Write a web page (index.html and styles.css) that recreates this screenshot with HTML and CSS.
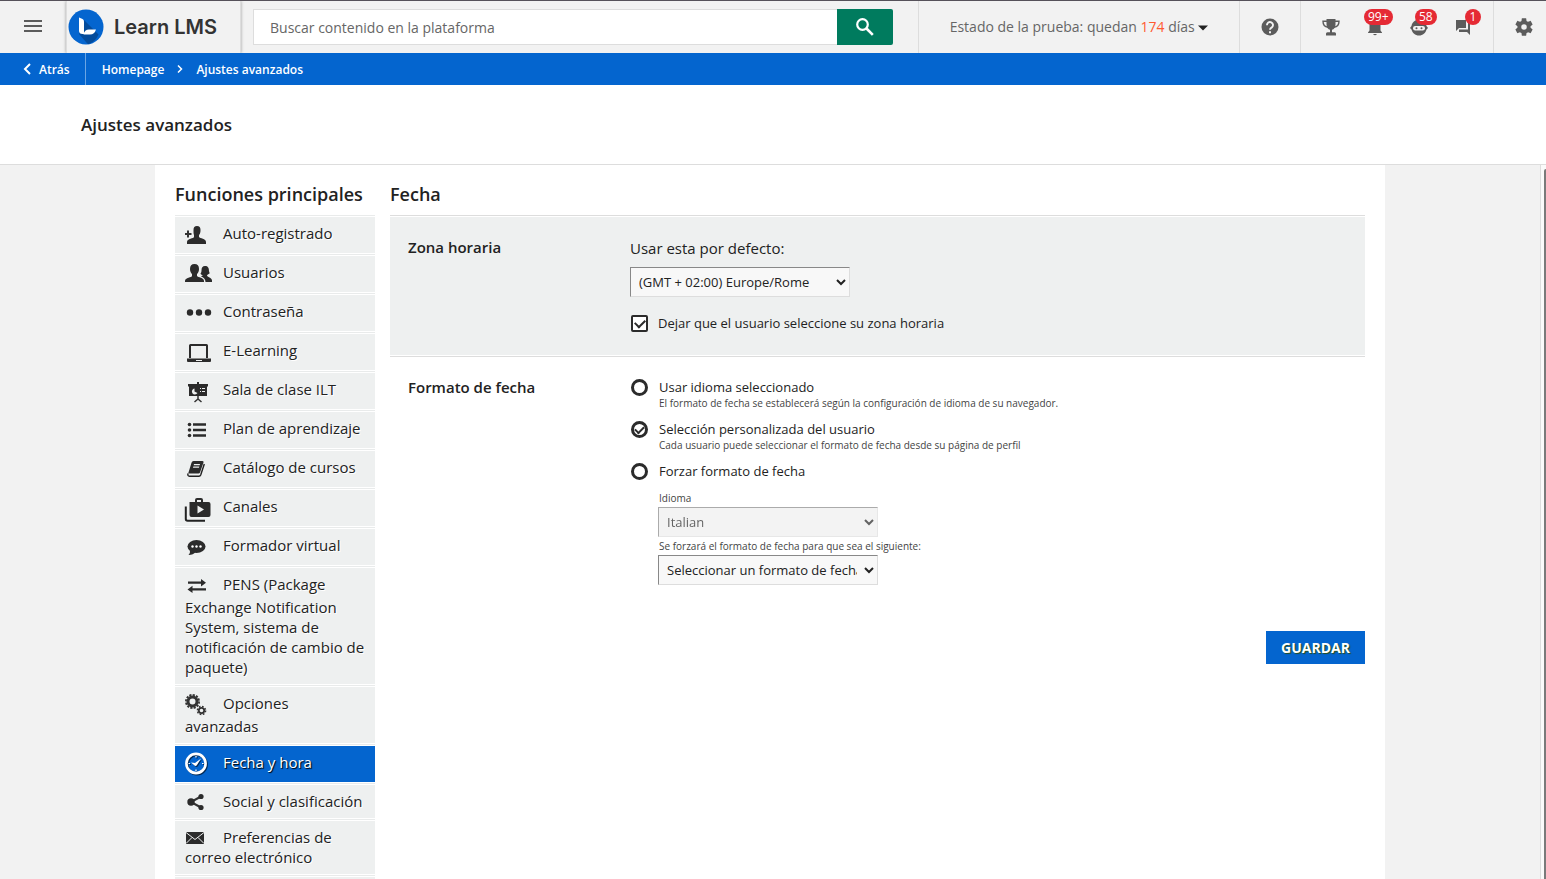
FILE: index.html
```html
<!DOCTYPE html>
<html lang="es">
<head>
    <meta charset="UTF-8">
    <meta name="viewport" content="width=device-width, initial-scale=1.0">
    <title>Ajustes avanzados</title>
    <link rel="stylesheet" href="styles.css">
</head>
<body>

<header class="topbar">
    <button class="menu-button" aria-label="Menú">
        <svg width="18" height="12" viewBox="0 0 18 12"><path d="M0 1h18M0 6h18M0 11h18" stroke="#5c5c5c" stroke-width="2"/></svg>
    </button>
    <a href="#" class="logo">
        <svg width="36" height="36" viewBox="0 0 36 36">
            <circle cx="18" cy="18" r="17.5" fill="#0465cf"/>
            <path d="M16 11l14.500 14.500A17.500 17.500 0 0 1 20 35.300L11 25z" fill="#034b9b"/>
            <path d="M11 8.500l3.500 1.500q1.500.8 1.500 2.500v12.500h-1.500Q11 25 11 21.500z" fill="#fff"/>
            <path d="M15.500 25.500q1-5 5.500-5h7q-1.500 5-6 5z" fill="#fff"/>
        </svg>
        <span>Learn LMS</span>
    </a>
    <form class="search">
        <input type="text" aria-label="Buscar" placeholder="Buscar contenido en la plataforma">
        <button type="button" aria-label="Buscar">
            <svg width="18" height="18" viewBox="0 0 18 18" fill="none" stroke="#fff"><circle cx="6.500" cy="6.500" r="5.300" stroke-width="2.200"/><path d="M10.500 10.500l6.300 6.300" stroke-width="2.600"/></svg>
        </button>
    </form>
    <button class="trial">Estado de la prueba: quedan <span class="days">174</span> días
        <svg width="10" height="6" viewBox="0 0 10 6"><path d="M0 .5h10L5 5.500z" fill="#222"/></svg>
    </button>
    <div class="tools help">
        <button aria-label="Ayuda">
            <svg width="18" height="18" viewBox="0 0 18 18"><circle cx="9" cy="9" r="8.500" fill="#5c5c5c"/><path d="M6 7.200a3 3 0 1 1 4.800 2.200Q9 10.500 9 11.800" fill="none" stroke="#f2f2f2" stroke-width="1.900"/><path d="M8 13.200h2v2H8z" fill="#f2f2f2"/></svg>
        </button>
    </div>
    <div class="tools alerts">
        <button aria-label="Logros">
            <svg width="18" height="17" viewBox="0 0 18 17" fill="#5c5c5c"><path d="M4.500 0h9v5.500c0 3-1.500 4.800-3.500 5.300v2.400h2.500c1 0 1.500.8 1.500 1.800v1.500H4V15c0-1 .5-1.800 1.500-1.800H8v-2.400C6 10.300 4.500 8.500 4.500 5.500z"/><path d="M5 2.300H1q0 5.500 5 6M13 2.300h4q0 5.500-5 6" fill="none" stroke="#5c5c5c" stroke-width="1.400"/></svg>
        </button>
        <button aria-label="Notificaciones">
            <svg width="18" height="18" viewBox="0 0 18 18" fill="#5c5c5c"><path d="M9 0c4 0 5.500 3 5.500 6v6.500l1.500 2V15H2v-.5l1.500-2V6C3.500 3 5 0 9 0zM7 16h4q-2 2.500-4 0z"/></svg>
            <span class="badge">99+</span>
        </button>
        <button aria-label="Asistente">
            <svg width="18" height="18" viewBox="0 0 18 18"><path d="M9 1.500c4 0 7 3 7.500 6.500L18 10l-1.500 1.500C15.500 15 13 17.500 9 17.500S2.500 15 1.500 11.500L0 10l1.500-2C2 4.500 5 1.500 9 1.500z" fill="#5c5c5c"/><rect x="3" y="8" width="12" height="4.500" rx="2.200" fill="#f2f2f2"/><circle cx="6.500" cy="10.200" r="1" fill="#5c5c5c"/><circle cx="11.500" cy="10.200" r="1" fill="#5c5c5c"/></svg>
            <span class="badge">58</span>
        </button>
        <button aria-label="Mensajes">
            <svg width="18" height="18" viewBox="0 0 18 18" fill="#5c5c5c"><path d="M2 2h10v8H5l-3 3zM14 5h2v12l-3-3H5v-2.500h9z"/></svg>
            <span class="badge">1</span>
        </button>
    </div>
    <div class="tools settings">
        <button aria-label="Configuración">
            <svg width="22" height="22" viewBox="0 0 24 24" fill="#5c5c5c"><path d="M19.140 12.940c.04-.3.060-.61.060-.94s-.02-.64-.07-.94l2.030-1.580c.18-.14.230-.41.120-.61l-1.920-3.320c-.12-.22-.37-.29-.59-.22l-2.390.96c-.5-.38-1.030-.7-1.620-.94L14.400 2.810c-.04-.24-.24-.41-.48-.41h-3.840c-.24 0-.43.170-.47.410L9.250 5.350c-.59.240-1.130.570-1.620.940L5.240 5.330c-.22-.08-.47 0-.59.220L2.740 8.870c-.12.210-.08.470.120.610l2.030 1.580c-.05.300-.09.630-.09.940s.02.640.070.940l-2.030 1.580c-.18.140-.23.410-.12.610l1.920 3.320c.12.220.370.290.590.220l2.390-.96c.5.380 1.030.7 1.620.940l.36 2.540c.05.240.240.410.480.410h3.840c.24 0 .44-.17.470-.41l.36-2.540c.59-.24 1.130-.56 1.620-.94l2.390.960c.22.080.470 0 .59-.22l1.920-3.320c.12-.22.070-.47-.12-.61zM12 15a3 3 0 1 1 0-6 3 3 0 0 1 0 6z"/></svg>
        </button>
    </div>
</header>

<nav class="breadcrumb">
    <a href="#" class="back">
        <svg width="8" height="12" viewBox="0 0 8 12"><path d="M7 1L2 6l5 5" fill="none" stroke="#fff" stroke-width="2"/></svg>
        Atrás
    </a>
    <a href="#">Homepage</a>
    <svg width="6" height="8" viewBox="0 0 6 8"><path d="M1 .5L4.500 4 1 7.500" fill="none" stroke="#fff" stroke-width="1.500"/></svg>
    <a href="#">Ajustes avanzados</a>
</nav>

<div class="page-title">
    <h1>Ajustes avanzados</h1>
</div>

<div class="viewport">
    <main class="wrapper">
        <aside class="sidebar">
            <h2>Funciones principales</h2>
            <ul>
                <li><a href="#"><svg viewBox="0 0 28 22"><path d="M8.500 6c0-2.500 1-4 3.500-4s3.500 1.500 3.500 4c0 2.500-.5 4-1.500 5v2c1 1.500 7 1.500 7 5v2H2v-2c0-3.500 7-3.500 7-5v-2C8.500 10 8.500 8 8.500 6z"/><path d="M3 6.500v7M0 10h6.500" stroke="#333" stroke-width="2"/></svg>Auto-registrado</a></li>
                <li><a href="#"><svg viewBox="0 0 28 22"><path d="M5 6c0-3.500 1.500-5 4.500-5S14 2.500 14 6c0 2.500-1 4-2 5v2c1 1.500 7 1.500 7 5v1H0v-1c0-3.500 7-3.500 7-5v-2C6 10 5 8.500 5 6z"/><path d="M20 3c3 0 4 2 4 5 0 1 1 2 .5 2.500-1 1-2.500 1-2.500 2 0 1.500 5 2 5 5v1.500h-6.500c0-3-2-4.500-4.500-5.500l2-1.500c-1 0-2-.5-2.500-1.500.5-.5 1-1.500 1-3C16.500 4.500 17.500 3 20 3z"/></svg>Usuarios</a></li>
                <li><a href="#"><svg viewBox="0 0 28 22"><circle cx="5" cy="10.500" r="3.200"/><circle cx="14" cy="10.500" r="3.200"/><circle cx="23" cy="10.500" r="3.200"/></svg>Contraseña</a></li>
                <li><a href="#"><svg viewBox="0 0 28 22"><path fill-rule="evenodd" d="M4 4.500Q4 3 5.500 3h16Q23 3 23 4.500V17H4zM6 5v12h15V5z"/><path fill-rule="evenodd" d="M2 17.500h24V20q0 1-1 1H3q-1 0-1-1zM11 19v1h6v-1z"/></svg>E-Learning</a></li>
                <li><a href="#"><svg viewBox="0 0 28 22"><path fill-rule="evenodd" d="M3 4h9V2h2v2h9v2.500h-1V16H4V6.500H3zM9.500 8.500a3 3 0 1 0 3 4.500l-3-1.500zM15 8v1h1V8zM17 8v1h3V8zM15 11v1h1v-1zM17 11v1h3v-1z"/><path d="M13 16v3M9.500 22l3.500-3 3.500 3" fill="none" stroke="#333" stroke-width="1.500"/></svg>Sala de clase ILT</a></li>
                <li><a href="#"><svg viewBox="0 0 28 22"><circle cx="4.500" cy="5.500" r="1.800"/><circle cx="4.500" cy="11" r="1.800"/><circle cx="4.500" cy="16.500" r="1.800"/><path d="M8 4.300h13v2.500H8zM8 9.800h13v2.500H8zM8 15.200h13v2.500H8z"/></svg>Plan de aprendizaje</a></li>
                <li><a href="#"><svg viewBox="0 0 28 22"><path fill-rule="evenodd" d="M8.500 3h9q1.500 0 1 1.500L15 14.500q-.4 1-1.500 1H3.200L6.500 4.800Q7 3 8.500 3zM9 6l-.3 1.200h6L15 6zM8.300 8.500L8 9.700h6l.3-1.200z"/><path d="M3 15.500q-.7 2.700 1.500 2.700h9.500q1.200 0 1.700-1.200L19.300 6" fill="none" stroke="#222" stroke-width="1.400"/></svg>Catálogo de cursos</a></li>
                <li><a href="#"><svg viewBox="0 0 28 22"><path fill-rule="evenodd" d="M10 5V3q0-2 2-2h4q2 0 2 2v2h5.500q2 0 2 2v11q0 2-2 2h-17q-2 0-2-2V5zM12 3v2h4V3zM12.500 8.500v8l6.500-4z"/><path d="M.8 9.500V22q0 1.800 1.800 1.800H20" fill="none" stroke="#222" stroke-width="2"/></svg>Canales</a></li>
                <li><a href="#"><svg viewBox="0 0 28 22"><ellipse cx="11.500" cy="10.500" rx="9" ry="6.500"/><path d="M5 13.500Q5.500 17 3.500 19q5 0 7-3z"/><g fill="#fff"><circle cx="7.500" cy="10.500" r="1.200"/><circle cx="11.500" cy="10.500" r="1.200"/><circle cx="15.500" cy="10.500" r="1.200"/></g></svg>Formador virtual</a></li>
                <li><a href="#"><svg viewBox="0 0 28 22"><path d="M3 6.500h13V4l5 3.700-5 3.700V8.800H3zM21 13.200H7.500v-2.500L2.500 14.500l5 3.500v-2.500H21z"/></svg>PENS (Package Exchange Notification System, sistema de notificación de cambio de paquete)</a></li>
                <li><a href="#"><svg viewBox="0 0 28 22"><circle cx="7.500" cy="7.500" r="4.500" fill="none" stroke="#333" stroke-width="3"/><circle cx="7.500" cy="7.500" r="6.600" fill="none" stroke="#333" stroke-width="1.800" stroke-dasharray="2.200 1.255"/><circle cx="16.500" cy="16.500" r="2.700" fill="none" stroke="#333" stroke-width="1.800"/><circle cx="16.500" cy="16.500" r="4.100" fill="none" stroke="#333" stroke-width="1.500" stroke-dasharray="1.700 1.520"/></svg>Opciones avanzadas</a></li>
                <li class="active"><a href="#"><svg viewBox="0 0 28 22"><circle cx="11" cy="10.500" r="9.600" fill="none" stroke="#fff" stroke-width="2.600"/><path d="M11 3v1.500M11 16.500V18M3.500 10.500H5M17 10.500h1.500" stroke="#fff" stroke-width="1.200"/><path d="M6 9.500l4 .5 6-4.500-4 6.500q-1.200 1.500-2.500.5z" fill="#fff"/></svg>Fecha y hora</a></li>
                <li class="compact"><a href="#"><svg viewBox="0 0 28 20"><path d="M6 11l10-5.500M6 11l10 5.500" stroke="#333" stroke-width="2"/><circle cx="6" cy="11" r="3.700"/><circle cx="16" cy="5.500" r="2.600"/><circle cx="16" cy="16.500" r="2.600"/></svg>Social y clasificación</a></li>
                <li class="compact"><a href="#"><svg viewBox="0 0 28 20"><path d="M1 5h18v12H1z"/><path d="M1 5.500l9 7 9-7M1 16.500l6-6M19 16.500l-6-6" fill="none" stroke="#eef0f0" stroke-width="1"/></svg>Preferencias de correo electrónico</a></li>
                <li class="compact"><a href="#" aria-label="Más"></a></li>
            </ul>
        </aside>

        <section class="content">
            <h2>Fecha</h2>
            <form>
                <div class="row shaded">
                    <h3>Zona horaria</h3>
                    <div class="fields">
                        <label for="timezone" class="lead">Usar esta por defecto:</label>
                        <select id="timezone">
                            <option>(GMT + 02:00) Europe/Rome</option>
                        </select>
                        <div class="option check">
                            <input type="checkbox" id="allow" checked>
                            <label for="allow">Dejar que el usuario seleccione su zona horaria</label>
                        </div>
                    </div>
                </div>
                <div class="row">
                    <h3>Formato de fecha</h3>
                    <div class="fields">
                        <div class="option">
                            <input type="radio" name="format" id="browser">
                            <label for="browser">Usar idioma seleccionado <small>El formato de fecha se establecerá según la configuración de idioma de su navegador.</small></label>
                        </div>
                        <div class="option">
                            <input type="radio" name="format" id="custom" checked>
                            <label for="custom">Selección personalizada del usuario <small>Cada usuario puede seleccionar el formato de fecha desde su página de perfil</small></label>
                        </div>
                        <div class="option short">
                            <input type="radio" name="format" id="force">
                            <label for="force">Forzar formato de fecha</label>
                        </div>
                        <div class="forced">
                            <label for="language">Idioma</label>
                            <select id="language" disabled>
                                <option>Italian</option>
                            </select>
                            <label for="dateformat">Se forzará el formato de fecha para que sea el siguiente:</label>
                            <select id="dateformat">
                                <option>Seleccionar un formato de fecha</option>
                            </select>
                        </div>
                    </div>
                </div>
                <div class="actions">
                    <button type="button" class="save">GUARDAR</button>
                </div>
            </form>
        </section>
    </main>
    <div class="scrollbar"><div class="thumb"></div></div>
</div>

</body>
</html>
```
FILE: styles.css
```css
* {
    box-sizing: border-box;
}

body {
    margin: 0;
    height: 100vh;
    display: flex;
    flex-direction: column;
    overflow: hidden;
    font-family: "Open Sans", sans-serif;
    font-size: 13px;
    color: #222;
    background-color: #fff;
}

a {
    color: inherit;
    text-decoration: none;
}

button,
input,
select {
    font-family: inherit;
}

button {
    border: none;
    background: none;
    padding: 0;
    cursor: pointer;
}

h1,
h2,
h3,
ul {
    margin: 0;
    padding: 0;
}

/* Top bar */
.topbar {
    flex: none;
    display: flex;
    height: 53px;
    border-top: 1px solid #56525a;
    background-color: #f2f2f2;
}

.menu-button {
    width: 66px;
}

.logo {
    display: flex;
    align-items: center;
    gap: 10px;
    width: 175px;
    padding-left: 1px;
    border-left: 1px solid #ddd;
    border-right: 1px solid #ddd;
    box-shadow: 0 0 3px rgba(0, 0, 0, 0.35);
    font-family: "Inter", sans-serif;
    font-size: 20px;
    font-weight: 600;
    color: #333;
    clip-path: inset(0 -4px);
}

.search {
    flex: 1;
    display: flex;
    margin: 8px 25px 8px 12px;
}

.search input {
    flex: 1;
    min-width: 0;
    padding: 0 16px;
    border: 1px solid #ddd;
    border-right: none;
    font-size: 14px;
    background-color: #fff;
}

.search input::placeholder {
    color: #666;
}

.search button {
    display: flex;
    align-items: center;
    justify-content: center;
    width: 56px;
    border-radius: 0 2px 2px 0;
    background-color: #007b5e;
}

.trial {
    width: 321px;
    padding-bottom: 2px;
    border-left: 1px solid #ddd;
    font-size: 14px;
    color: #666;
}

.trial .days {
    color: #ff5a30;
}

.trial svg {
    vertical-align: 1px;
}

.tools {
    display: flex;
    align-items: center;
    justify-content: center;
    border-left: 1px solid #ddd;
}

.help {
    width: 61px;
}

.alerts {
    width: 193px;
    gap: 26px;
}

.settings {
    width: 53px;
    padding-left: 8px;
}

.tools button {
    position: relative;
    display: flex;
}

.badge {
    position: absolute;
    left: 50%;
    bottom: 11px;
    height: 16px;
    min-width: 16px;
    margin-left: -11px;
    padding: 0 4px;
    border-radius: 8px;
    background-color: #e52a34;
    color: #fff;
    font-size: 12px;
    line-height: 16px;
}

.tools button + button + button .badge {
    margin-left: -4px;
}

.tools button:last-child .badge {
    margin-left: 2px;
}

/* Breadcrumb */
.breadcrumb {
    flex: none;
    display: flex;
    align-items: center;
    height: 32px;
    background-color: #0465cf;
    color: #fff;
    font-size: 12px;
    font-weight: 600;
}

.breadcrumb > svg {
    margin: 0 13px;
}

.breadcrumb .back {
    display: flex;
    align-items: center;
    gap: 8px;
    height: 100%;
    margin-right: 16px;
    padding: 0 15px 0 23px;
    border-right: 1px solid #6ba5e4;
}

.page-title {
    flex: none;
    padding: 28px 81px 27px;
    border-bottom: 1px solid #ddd;
}

.page-title h1 {
    font-size: 17px;
    line-height: 24px;
    font-weight: 600;
}

/* Scrolling area */
.viewport {
    flex: 1;
    min-height: 0;
    display: flex;
    overflow: hidden;
    background-color: #f2f2f2;
}

.wrapper {
    flex: 1;
    display: flex;
    gap: 15px;
    max-width: 1230px;
    margin: 0 auto;
    padding: 20px;
    background-color: #fff;
}

.scrollbar {
    width: 6px;
    padding: 4px 0 0 3px;
    border-left: 1px solid #ddd;
    background-color: #fafafa;
}

.thumb {
    height: 100%;
    border-radius: 2px 0 0 0;
    background-color: #7a7a7a;
}

.wrapper h2 {
    height: 30px;
    font-size: 18px;
    line-height: 18px;
    font-weight: 600;
    white-space: nowrap;
}

/* Sidebar */
.sidebar {
    flex: none;
    width: 200px;
}

.sidebar ul {
    list-style: none;
    border-top: 1px solid #e9ebeb;
}

.sidebar li {
    padding: 1px 0;
    border-bottom: 1px solid #e9ebeb;
}

.sidebar a {
    display: block;
    min-height: 33px;
    padding: 6px 10px 7px;
    background-color: #eef0f0;
    font-size: 15px;
    line-height: 20px;
    text-shadow: 1px 1px 0 #fff;
}

.sidebar svg {
    width: 28px;
    height: 22px;
    margin-right: 10px;
    vertical-align: -7px;
    overflow: visible;
    fill: #2b2b2b;
}

.sidebar .compact svg {
    height: 20px;
    vertical-align: -4px;
}

.sidebar .active a {
    background-color: #0465cf;
    color: #fff;
    text-shadow: 1px 1px 1px #000;
}

.sidebar .active svg {
    filter: drop-shadow(1px 1px 0 rgba(0, 0, 0, 0.6));
}

/* Settings form */
.content {
    flex: 1;
    min-width: 0;
}

.content form {
    border-top: 1px solid #ddd;
}

.row {
    display: flex;
    min-height: 140px;
    padding: 20px 18px;
}

.shaded {
    margin-top: 1px;
    border-bottom: 1px solid #ddd;
    background-color: #eef0f0;
    box-shadow: inset 0 -1px #fff;
}

.row h3 {
    width: 222px;
    font-size: 15px;
    line-height: 20px;
    font-weight: 600;
}

.fields .lead {
    display: block;
    margin-bottom: 8px;
    font-size: 15px;
    line-height: 22px;
}

select {
    display: block;
    width: 220px;
    height: 30px;
    padding: 0 4px;
    border: 1px solid;
    border-color: #888 #ddd #ddd #888;
    border-radius: 0;
    background-color: #f8f8f8;
    color: #222;
    font-size: 13px;
}

select:disabled {
    opacity: 0.7;
    background-color: #eee;
}

.option {
    display: flex;
    gap: 11px;
    min-height: 42px;
}

.option label {
    line-height: 20px;
}

.option small {
    display: block;
    font-size: 10px;
    line-height: 12px;
    color: #444;
}

.short {
    min-height: 28px;
}

.check {
    gap: 10px;
    min-height: 22px;
    margin-top: 16px;
}

.option input {
    flex: none;
    appearance: none;
    display: flex;
    align-items: center;
    justify-content: center;
    width: 17px;
    height: 17px;
    margin: 2px 0 0 1px;
    border: 3px solid #2b2b2b;
    border-radius: 50%;
    background-color: #fff;
}

.option input[type="checkbox"] {
    border-width: 2px;
    border-radius: 2px;
}

.option input:checked::after {
    content: "";
    width: 8px;
    height: 5px;
    margin-top: -2px;
    border-left: 2px solid #2b2b2b;
    border-bottom: 2px solid #2b2b2b;
    transform: rotate(-45deg);
}

.option input[type="radio"]:checked::after {
    width: 7px;
    height: 4px;
}

.forced {
    padding-left: 28px;
}

.forced label {
    display: block;
    padding-left: 1px;
    font-size: 10px;
    line-height: 18px;
    color: #444;
}

.actions {
    display: flex;
    justify-content: flex-end;
    margin-top: 26px;
}

.save {
    padding: 0 15px;
    height: 33px;
    background-color: #0465cf;
    color: #fff;
    font-size: 14px;
    font-weight: 700;
    text-shadow: 1px 1px 1px #264d1c;
}
```
